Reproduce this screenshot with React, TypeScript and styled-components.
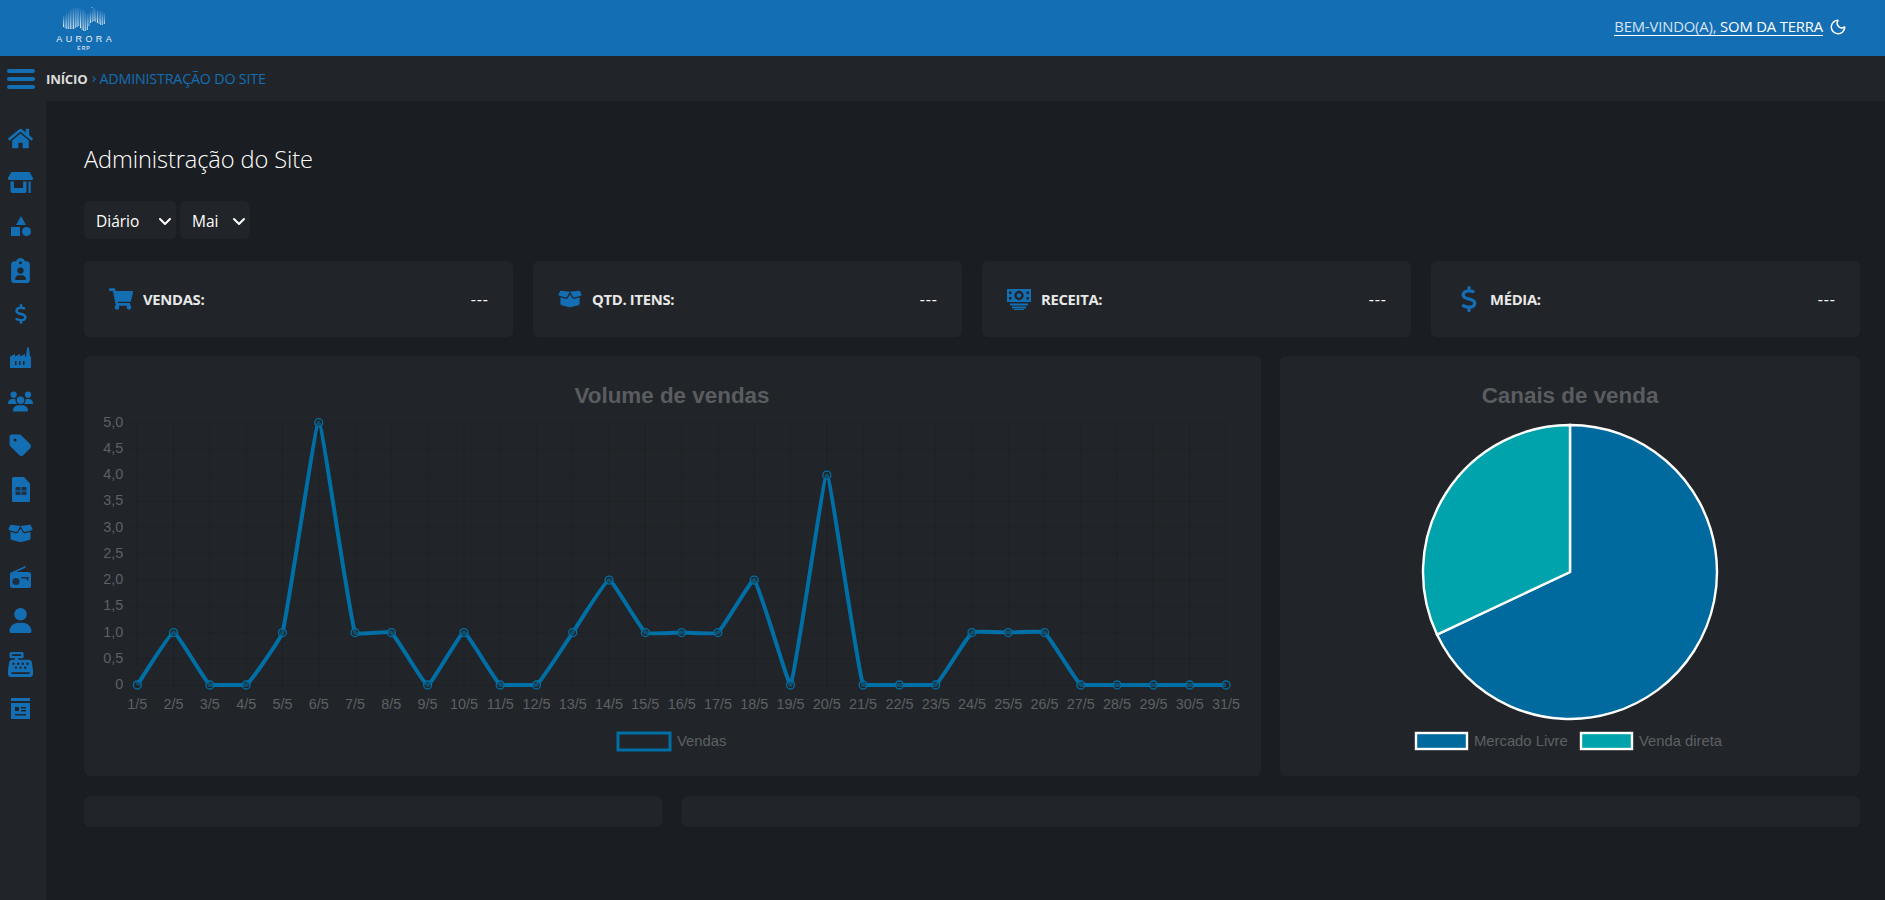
import React from "react";
import styled, { createGlobalStyle } from "styled-components";
import { FaHome, FaShoppingCart } from "react-icons/fa";
import {
  FaClipboardUser, FaDollarSign, FaUsers, FaTag, FaBoxOpen, FaUser, FaCashRegister,
} from "react-icons/fa6";
import { Moon } from "lucide-react";
import { MdChevronRight } from "react-icons/md";

const Global = createGlobalStyle`
  * { box-sizing: border-box; }
  html, body { margin: 0; padding: 0; background: #1a1d21; }
  body { font-family: "Open Sans", "Noto Sans", sans-serif; color: #fff; }
`;

const Page = styled.div`
  width: 1885px;
  height: 900px;
  display: flex;
  flex-direction: column;
  overflow: hidden;
  background: #1a1d21;
`;
const Header = styled.header`
  height: 56px;
  background: #146eb4;
  display: flex;
  align-items: center;
  justify-content: space-between;
  padding: 0 38px 0 56px;
  flex: none;
`;
const Brand = styled.div`
  width: 56px;
  display: flex;
  flex-direction: column;
  align-items: center;
`;
const BrandName = styled.span`
  font-family: "Liberation Sans", sans-serif;
  font-size: 9px;
  line-height: 11px;
  letter-spacing: 3.4px;
  margin-right: -3.4px;
  color: #e8eff6;
  margin-top: 2px;
`;
const BrandSub = styled.span`
  font-family: "Liberation Sans", sans-serif;
  font-size: 5px;
  font-weight: 700;
  line-height: 7px;
  letter-spacing: 1px;
  color: #cfdeed;
`;
const Welcome = styled.div`
  display: flex;
  align-items: center;
  gap: 6px;
  margin-top: -3px;
`;
const WelcomeText = styled.span`
  font-size: 14.8px;
  color: #d5e4f2;
  border-bottom: 1px solid #fff;
  line-height: 18px;
  letter-spacing: -0.15px;
`;
const WelcomeName = styled.span`
  color: #fff;
`;
const Crumbs = styled.div`
  height: 45px;
  flex: none;
  background: #212529;
  display: flex;
  align-items: center;
  padding-left: 7px;
  gap: 11px;
`;
const Burger = styled.div`
  width: 28px;
  display: flex;
  flex-direction: column;
  gap: 4px;
`;
const BurgerBar = styled.span`
  height: 4px;
  border-radius: 2px;
  background: #146eb4;
`;
const CrumbText = styled.div`
  display: flex;
  align-items: center;
`;
const CrumbHome = styled.span`
  font-size: 13.2px;
  letter-spacing: -0.2px;
  font-weight: 700;
  color: #dcdcdc;
`;
const CrumbSep = styled.span`
  color: #146eb4;
  display: flex;
`;
const CrumbCurrent = styled.span`
  font-size: 14.3px;
  letter-spacing: -0.2px;
  color: #146eb4;
`;
const Body = styled.div`
  flex: 1;
  display: flex;
  min-height: 0;
`;
const Side = styled.nav`
  width: 46px;
  flex: none;
  background: #212529;
  display: flex;
  flex-direction: column;
  align-items: center;
  padding: 16px 5px 0 0;
`;
const SideItem = styled.div<{ $size?: number }>`
  height: 43.8px;
  display: flex;
  align-items: center;
  justify-content: center;
  color: #146eb4;
  font-size: ${(p) => p.$size ?? 25}px;
`;
const Main = styled.main`
  flex: 1;
  padding: 41px 25px 0 38px;
  display: flex;
  flex-direction: column;
`;
const Title = styled.h1`
  margin: 0;
  font-size: 23.6px;
  font-weight: 300;
  line-height: 34px;
  color: #fff;
  letter-spacing: -0.1px;
`;
const Filters = styled.div`
  display: flex;
  gap: 4px;
  margin-top: 25px;
`;
const Select = styled.div<{ $w: number }>`
  width: ${(p) => p.$w}px;
  height: 38px;
  background: #212529;
  border-radius: 6px;
  display: flex;
  align-items: center;
  justify-content: space-between;
  padding: 1px 3px 0 12px;
  font-size: 15.5px;
  color: #fff;
`;
const Chevron = styled.svg`
  width: 16px;
  height: 16px;
  fill: none;
  stroke: #fff;
  stroke-width: 2;
  stroke-linecap: round;
  stroke-linejoin: round;
`;
const Stats = styled.div`
  display: grid;
  grid-template-columns: repeat(4, 1fr);
  gap: 20px;
  margin-top: 22px;
`;
const Panel = styled.section`
  background: #212529;
  border-radius: 6px;
`;
const Stat = styled(Panel)`
  height: 76px;
  display: flex;
  align-items: center;
  padding: 0 25px;
`;
const StatIcon = styled.span`
  width: 34px;
  display: flex;
  color: #146eb4;
  font-size: 24px;
`;
const StatLabel = styled.span`
  flex: 1;
  font-size: 14.8px;
  font-weight: 700;
  color: #e8e8e8;
  letter-spacing: -0.3px;
`;
const StatValue = styled.span`
  font-size: 16px;
  color: #fff;
  letter-spacing: 0.9px;
  margin-right: -0.9px;
`;
const Charts = styled.div`
  display: grid;
  grid-template-columns: 1177px 580px;
  gap: 19px;
  margin-top: 19px;
`;
const ChartPanel = styled(Panel)`
  height: 420px;
`;
const ChartSvg = styled.svg`
  display: block;
  width: 100%;
  height: 100%;
`;
const Bottom = styled.div`
  display: grid;
  grid-template-columns: 578px 1fr;
  gap: 20px;
  margin-top: 20px;
`;
const Stub = styled(Panel)`
  height: 31px;
`;

const LINE = "#006fa6";
const DATA = [0,1,0,0,1,5,1,1,0,1,0,0,1,2,1,1,1,2,0,4,0,0,0,1,1,1,0,0,0,0,0];
const X0 = 53.3, DX = 36.29, YT = 66.7, YB = 329;
const px = (i: number) => X0 + i * DX;
const py = (v: number) => YB - (v / 5) * (YB - YT);

function spline(t: number) {
  const pts = DATA.map((v, i) => ({ x: px(i), y: py(v) }));
  let d = `M${pts[0].x} ${pts[0].y}`;
  const ctrl = pts.map((p, i) => {
    const a = pts[Math.max(i - 1, 0)], b = pts[Math.min(i + 1, pts.length - 1)];
    const d01 = Math.hypot(p.x - a.x, p.y - a.y), d12 = Math.hypot(b.x - p.x, b.y - p.y);
    const s = d01 + d12 || 1;
    const fa = (t * d01) / s, fb = (t * d12) / s;
    return {
      px: p.x - fa * (b.x - a.x), py: Math.min(YB, Math.max(YT, p.y - fa * (b.y - a.y))),
      nx: p.x + fb * (b.x - a.x), ny: Math.min(YB, Math.max(YT, p.y + fb * (b.y - a.y))),
    };
  });
  for (let i = 1; i < pts.length; i++) {
    d += `C${ctrl[i - 1].nx} ${ctrl[i - 1].ny} ${ctrl[i].px} ${ctrl[i].py} ${pts[i].x} ${pts[i].y}`;
  }
  return d;
}

const AXIS = { fontFamily: "'Liberation Sans', sans-serif", fontSize: 14.4, fill: "#5d6064" } as const;
const LEGEND = { fontFamily: "'Liberation Sans', sans-serif", fontSize: 14.8, fill: "#5d6064" } as const;
const TITLE = { fontFamily: "'Liberation Sans', sans-serif", fontSize: 22.4, fontWeight: 700, fill: "#5a5d60" } as const;

function LineChart() {
  const ys = [0, 0.5, 1, 1.5, 2, 2.5, 3, 3.5, 4, 4.5, 5];
  return (
    <ChartSvg viewBox="0 0 1177 420">
      <text x={588} y={47} textAnchor="middle" {...TITLE}>Volume de vendas</text>
      {ys.map((v) => (
        <g key={v}>
          <line x1={X0 - 7} x2={px(30)} y1={py(v)} y2={py(v)} stroke="rgba(0,0,0,.09)" />
          <text x={X0 - 14} y={py(v) + 4} textAnchor="end" {...AXIS}>{v === 0 ? "0" : v.toFixed(1).replace(".", ",")}</text>
        </g>
      ))}
      {DATA.map((_, i) => (
        <g key={i}>
          <line x1={px(i)} x2={px(i)} y1={YT} y2={YB + 7} stroke="rgba(0,0,0,.09)" />
          <text x={px(i)} y={353} textAnchor="middle" {...AXIS}>{`${i + 1}/5`}</text>
        </g>
      ))}
      <path d={spline(0.1)} fill="none" stroke={LINE} strokeWidth={4} />
      {DATA.map((v, i) => (
        <circle key={i} cx={px(i)} cy={py(v)} r={4} fill="rgba(33,37,41,.45)" stroke={LINE} strokeWidth={1.3} />
      ))}
      <rect x={534} y={377} width={52} height={17} fill="none" stroke={LINE} strokeWidth={3} />
      <text x={593} y={390} {...LEGEND}>Vendas</text>
    </ChartSvg>
  );
}

function PieChart() {
  const cx = 290, cy = 216, r = 147;
  const a = (244.8 * Math.PI) / 180;
  const ex = cx + r * Math.sin(a), ey = cy - r * Math.cos(a);
  return (
    <ChartSvg viewBox="0 0 580 420">
      <text x={290} y={47} textAnchor="middle" {...TITLE}>Canais de venda</text>
      <path d={`M${cx} ${cy}L${cx} ${cy - r}A${r} ${r} 0 1 1 ${ex} ${ey}Z`} fill="#006a9e" stroke="#fff" strokeWidth={2.4} />
      <path d={`M${cx} ${cy}L${ex} ${ey}A${r} ${r} 0 0 1 ${cx} ${cy - r}Z`} fill="#00a2ab" stroke="#fff" strokeWidth={2.4} />
      <rect x={136} y={377} width={51} height={16} fill="#006a9e" stroke="#fff" strokeWidth={2.4} />
      <text x={194} y={390} {...LEGEND}>Mercado Livre</text>
      <rect x={301} y={377} width={51} height={16} fill="#00a2ab" stroke="#fff" strokeWidth={2.4} />
      <text x={359} y={390} {...LEGEND}>Venda direta</text>
    </ChartSvg>
  );
}

const AURORA: [number, number][] = [
  [11,22],[10,23],[8,24],[7,24],[5,24],[4,24],[3,24],[2,23],[3,22],[3,21],[5,23],[4,25],[5,26],
  [7,26],[9,25],[8,21],[7,18],[5,17],[4,16],[5,17],[5,18],[6,19],[6,20],[7,20],[8,19],
];

function Logo() {
  return (
    <svg width="42" height="27" viewBox="0 0 42 27" aria-hidden="true">
      <defs>
        <linearGradient id="aur" x1="0" y1="0" x2="0" y2="1">
          <stop offset="0" stopColor="#fff" stopOpacity=".1" />
          <stop offset="1" stopColor="#fff" stopOpacity="1" />
        </linearGradient>
      </defs>
      {AURORA.map(([a, b], i) => (
        <rect key={i} x={i * 1.7} y={a} width={0.9} height={b - a} fill="url(#aur)" opacity={i % 2 ? 0.7 : 1} />
      ))}
      <circle cx="29" cy="2.5" r=".5" fill="#cfe2f3" />
      <circle cx="31" cy="4" r=".4" fill="#cfe2f3" />
    </svg>
  );
}

function StoreIcon() {
  return (
    <svg width="25" height="21" viewBox="0 0 25 21" fill="currentColor" aria-hidden="true">
      <path d="M3.500 0h18l3.300 5.600c.6 1.100-.1 2.400-1.400 2.400H1.600C.3 8-.4 6.700.2 5.600z" />
      <path d="M2.500 9.500h3.400V16h9.200V9.500h3.400V19a2 2 0 0 1-2 2h-12a2 2 0 0 1-2-2z" />
      <rect x="20.500" y="9.500" width="2.200" height="11.500" />
    </svg>
  );
}

function ShapesIcon() {
  return (
    <svg width="20" height="20" viewBox="0 0 20 20" fill="currentColor" aria-hidden="true">
      <path d="M10 0l5 9H5z" />
      <rect x="0" y="11" width="9" height="9" />
      <circle cx="15.500" cy="15.500" r="4.500" />
    </svg>
  );
}

function IndustryIcon() {
  return (
    <svg width="21" height="21" viewBox="0 0 21 21" fill="currentColor" aria-hidden="true">
      <path fillRule="evenodd" d="M0 21V9.500L5 7v2.500L10 7v2.500L15 7v2.500h1L17 1c.1-.6 1.900-.6 2 0l1 8.500h1V21zM5 14v4h1.500v-4zM9 14v4h1.500v-4zM13 14v4h1.500v-4z" />
    </svg>
  );
}

function SheetIcon() {
  return (
    <svg width="18" height="25" viewBox="0 0 18 25" aria-hidden="true">
      <path fill="currentColor" d="M1.500 0H12l6 6.500V23.500a1.500 1.500 0 0 1-1.500 1.500h-15A1.500 1.500 0 0 1 0 23.500v-22A1.500 1.500 0 0 1 1.500 0z" />
      <rect x="3.500" y="10" width="11" height="8" rx="1" fill="#1c3145" />
      <path d="M3.500 14h11M9 10v8" stroke="currentColor" strokeWidth="1" />
    </svg>
  );
}

function RadioIcon() {
  return (
    <svg width="21" height="22" viewBox="0 0 21 22" aria-hidden="true">
      <path d="M1 7.500L15 1" stroke="currentColor" strokeWidth="1.600" strokeLinecap="round" />
      <rect x="0" y="6" width="21" height="16" rx="2.500" fill="currentColor" />
      <circle cx="6" cy="15.500" r="3.600" fill="#1c2f42" />
      <path d="M11 11h7.500v3.500h-1.800v-2H11z" fill="#1c2f42" />
    </svg>
  );
}

function NewsIcon() {
  return (
    <svg width="20" height="21" viewBox="0 0 20 21" fill="currentColor" aria-hidden="true">
      <rect x="0" y="0" width="19" height="3" />
      <path fillRule="evenodd" d="M0 5h19v16H0zM4 9v4h4V9zM10 9v1.500h5V9zM10 12v1.500h5V12zM4 16v1.500h11V16z" />
    </svg>
  );
}

function MoneyIcon() {
  return (
    <svg width="24" height="21" viewBox="0 0 24 21" fill="currentColor" aria-hidden="true">
      <path fillRule="evenodd" d="M0 0h24v13H0zM12 1.800a4.700 4.700 0 1 0 0 9.400 4.700 4.700 0 0 0 0-9.400zM12 4.200a2.300 2.300 0 1 1 0 4.600 2.300 2.300 0 0 1 0-4.600zM2 2.500v2.500h2.500V2.500zM19.500 2.500v2.500H22V2.500zM2 8v2.500h2.500V8zM19.500 8v2.500H22V8z" />
      <rect x="3" y="14.500" width="18" height="2" />
      <rect x="5" y="17.500" width="14" height="2" />
      <rect x="7" y="20" width="10" height="1" />
    </svg>
  );
}

const sideIcons: { icon: React.ReactNode; size?: number }[] = [
  { icon: <FaHome /> },
  { icon: <StoreIcon /> },
  { icon: <ShapesIcon /> },
  { icon: <FaClipboardUser /> },
  { icon: <FaDollarSign />, size: 20 },
  { icon: <IndustryIcon /> },
  { icon: <FaUsers /> },
  { icon: <FaTag /> },
  { icon: <SheetIcon /> },
  { icon: <FaBoxOpen /> },
  { icon: <RadioIcon /> },
  { icon: <FaUser /> },
  { icon: <FaCashRegister /> },
  { icon: <NewsIcon /> },
];

const stats: { icon: React.ReactNode; label: string }[] = [
  { icon: <FaShoppingCart />, label: "VENDAS:" },
  { icon: <FaBoxOpen />, label: "QTD. ITENS:" },
  { icon: <MoneyIcon />, label: "RECEITA:" },
  { icon: <FaDollarSign size={26} />, label: "MÉDIA:" },
];

export default function App() {
  return (
    <Page>
      <Global />
      <Header>
        <Brand>
          <Logo />
          <BrandName>AURORA</BrandName>
          <BrandSub>ERP</BrandSub>
        </Brand>
        <Welcome>
          <WelcomeText>BEM-VINDO(A), <WelcomeName>SOM DA TERRA</WelcomeName></WelcomeText>
          <Moon size={18} color="#fff" strokeWidth={2} />
        </Welcome>
      </Header>
      <Crumbs>
        <Burger><BurgerBar /><BurgerBar /><BurgerBar /></Burger>
        <CrumbText>
          <CrumbHome>INÍCIO</CrumbHome>
          <CrumbSep><MdChevronRight size={12} /></CrumbSep>
          <CrumbCurrent>ADMINISTRAÇÃO DO SITE</CrumbCurrent>
        </CrumbText>
      </Crumbs>
      <Body>
        <Side>
          {sideIcons.map((s, i) => <SideItem key={i} $size={s.size}>{s.icon}</SideItem>)}
        </Side>
        <Main>
          <Title>Administração do Site</Title>
          <Filters>
            <Select $w={92}>Diário<Chevron viewBox="0 0 16 16"><path d="M3 6l5 5 5-5" /></Chevron></Select>
            <Select $w={70}>Mai<Chevron viewBox="0 0 16 16"><path d="M3 6l5 5 5-5" /></Chevron></Select>
          </Filters>
          <Stats>
            {stats.map((s) => (
              <Stat key={s.label}>
                <StatIcon>{s.icon}</StatIcon>
                <StatLabel>{s.label}</StatLabel>
                <StatValue>---</StatValue>
              </Stat>
            ))}
          </Stats>
          <Charts>
            <ChartPanel><LineChart /></ChartPanel>
            <ChartPanel><PieChart /></ChartPanel>
          </Charts>
          <Bottom><Stub /><Stub /></Bottom>
        </Main>
      </Body>
    </Page>
  );
}
